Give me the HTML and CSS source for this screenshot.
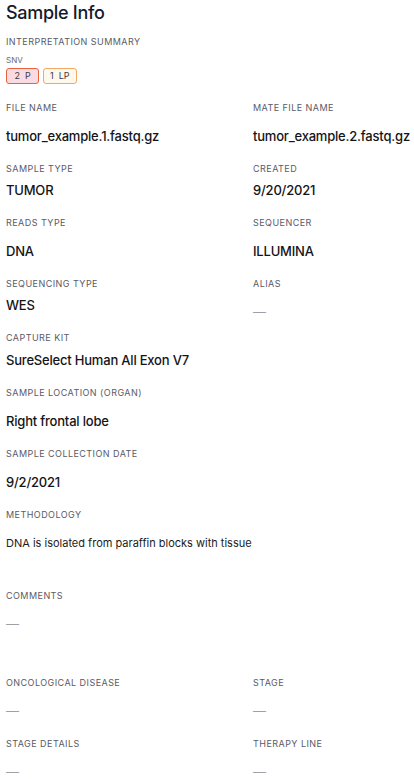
FILE: index.html
```html
<!DOCTYPE html>
<html lang="en">
<head>
<meta charset="utf-8">
<title>Sample Info</title>
<link rel="stylesheet" href="styles.css">
</head>
<body>
<main class="sample-info">
  <h1 class="title">Sample Info</h1>

  <section class="summary">
    <div class="label">Interpretation summary</div>
    <div class="variant-type">SNV</div>
    <div class="badges">
      <span class="badge badge-p"><span>2</span><span>P</span></span>
      <span class="badge badge-lp"><span>1</span><span>LP</span></span>
    </div>
  </section>

  <div class="row row-first">
    <div class="field"><div class="label">File name</div><div class="value">tumor_example.1.fastq.gz</div></div>
    <div class="field"><div class="label">Mate file name</div><div class="value">tumor_example.2.fastq.gz</div></div>
  </div>

  <div class="row">
    <div class="field"><div class="label">Sample type</div><div class="value value-tight">TUMOR</div></div>
    <div class="field"><div class="label">Created</div><div class="value value-tight">9/20/2021</div></div>
  </div>

  <div class="row">
    <div class="field"><div class="label">Reads type</div><div class="value">DNA</div></div>
    <div class="field"><div class="label">Sequencer</div><div class="value">ILLUMINA</div></div>
  </div>

  <div class="row">
    <div class="field"><div class="label">Sequencing type</div><div class="value value-tight">WES</div></div>
    <div class="field"><div class="label">Alias</div><div class="value empty">—</div></div>
  </div>

  <div class="row row-single row-close">
    <div class="field"><div class="label">Capture kit</div><div class="value value-tight">SureSelect Human All Exon V7</div></div>
  </div>

  <div class="row row-single">
    <div class="field"><div class="label">Sample location (organ)</div><div class="value">Right frontal lobe</div></div>
  </div>

  <div class="row row-single">
    <div class="field"><div class="label">Sample collection date</div><div class="value">9/2/2021</div></div>
  </div>

  <div class="row row-single">
    <div class="field"><div class="label">Methodology</div><div class="value value-text">DNA is isolated from paraffin blocks with tissue</div></div>
  </div>

  <div class="row row-single row-after-text">
    <div class="field"><div class="label">Comments</div><div class="value empty">—</div></div>
  </div>

  <div class="row row-after-comments">
    <div class="field"><div class="label">Oncological disease</div><div class="value empty">—</div></div>
    <div class="field"><div class="label">Stage</div><div class="value empty">—</div></div>
  </div>

  <div class="row">
    <div class="field"><div class="label">Stage details</div><div class="value empty">—</div></div>
    <div class="field"><div class="label">Therapy line</div><div class="value empty">—</div></div>
  </div>
</main>
</body>
</html>
```

FILE: styles.css
```css
* { box-sizing: border-box; }

html, body {
  margin: 0;
  padding: 0;
  background: #ffffff;
}

body {
  font-family: Inter, "Noto Sans", "Liberation Sans", sans-serif;
  color: #16161d;
}

.sample-info {
  padding: 0 6px;
}

.title {
  margin: 1px 0 0;
  font-size: 18px;
  line-height: 24px;
  letter-spacing: -0.3px;
  font-weight: 500;
  color: #141a2c;
}

.summary {
  margin-top: 10px;
}

.label {
  font-size: 9px;
  line-height: 14px;
  letter-spacing: 0.45px;
  text-transform: uppercase;
  color: #5a5a66;
  font-weight: 400;
}

.variant-type {
  margin-top: 6px;
  font-size: 8px;
  line-height: 10px;
  color: #6a6a76;
}

.badges {
  margin-top: 3px;
  display: flex;
  gap: 4px;
}

.badge {
  display: inline-flex;
  align-items: center;
  justify-content: center;
  gap: 5px;
  min-width: 33px;
  height: 16px;
  padding: 0 6px;
  border: 1px solid;
  border-radius: 3px;
  font-size: 9px;
  line-height: 14px;
  color: #3a3a44;
}

.badge-p {
  background: #fadbe2;
  border-color: #e9623e;
}

.badge-lp {
  background: #fff8ec;
  border-color: #f2a965;
}

.row {
  display: grid;
  grid-template-columns: 247px 1fr;
  align-items: start;
  margin-top: 16px;
}

.row-single {
  grid-template-columns: 1fr;
}

.row-first { margin-top: 17px; }
.row-close { margin-top: 9px; }
.row-after-text { margin-top: 36px; }
.row-after-comments { margin-top: 42px; }

.value {
  margin-top: 11px;
  font-size: 13px;
  line-height: 20px;
  letter-spacing: -0.2px;
  font-weight: 500;
  color: #141418;
}

.value-tight { margin-top: 4px; }
.row-close .value-tight { margin-top: 5px; }

.value-text {
  font-size: 11px;
  letter-spacing: 0;
  font-weight: 400;
  color: #1c1c22;
}

.empty {
  font-weight: 400;
  color: #a0a0a6;
}
```
